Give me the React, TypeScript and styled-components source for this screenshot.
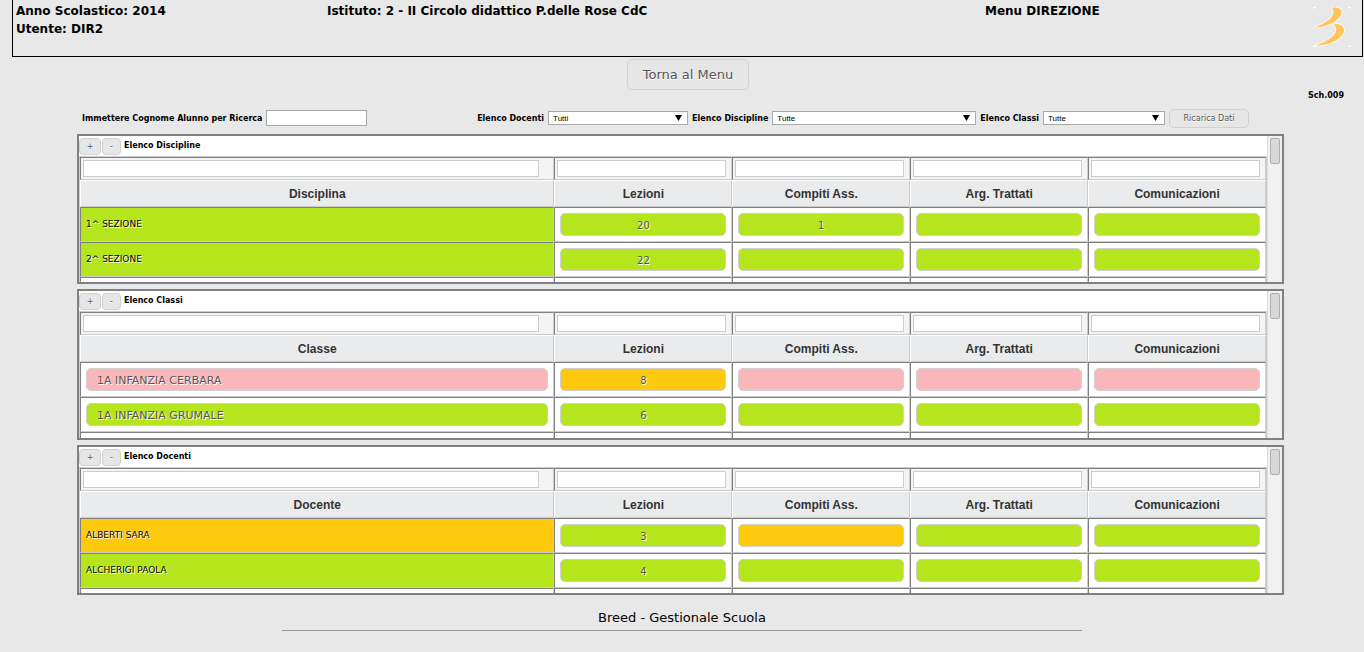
import React from 'react';
import styled, { createGlobalStyle } from 'styled-components';

const GlobalStyle = createGlobalStyle`
  * { box-sizing: border-box; }
  body {
    margin: 0;
    background: #e8e8e8;
    color: #000;
    font-family: Verdana, "DejaVu Sans", sans-serif;
    font-size: 8px;
  }
`;

const green = '#b5e61d';
const amber = '#ffc90e';
const pink = '#fab7b9';

const Page = styled.div`
  display: flex;
  flex-direction: column;
`;

const Header = styled.header`
  display: grid;
  grid-template-columns: 311fr 658fr 366fr;
  height: 57px;
  margin: 0 1px 0 12px;
  padding: 2px 11px 0 3px;
  border: 1px solid #000;
  border-top: 0;
  font-size: 12px;
  font-weight: bold;
  line-height: 18px;
`;

const HeaderEnd = styled.div`
  display: flex;
  justify-content: space-between;
`;

const Logo = styled.svg`
  width: 38px;
  height: 40px;
  margin-top: 5px;
`;

const ButtonBase = styled.button`
  border: 1px solid #d0d0d0;
  border-radius: 5px;
  background: #e6e6e6;
  color: #555;
  font-family: inherit;
  text-shadow: 0 1px 0 #fff;
`;

const MenuButton = styled(ButtonBase)`
  align-self: center;
  width: 122px;
  height: 31px;
  margin: 2px 0 0 12px;
  padding: 0;
  font-size: 13px;
`;

const ScreenCode = styled.div`
  margin-right: 20px;
  text-align: right;
  font-weight: bold;
  line-height: 12px;
`;

const Filters = styled.form`
  display: flex;
  align-items: center;
  justify-content: space-between;
  height: 20px;
  margin: 6px 115px 6px 82px;
  font-weight: bold;
`;

const FilterGroup = styled.div`
  display: flex;
  align-items: center;
  gap: 4px;
`;

const SearchInput = styled.input`
  width: 101px;
  height: 16px;
  padding: 0 2px;
  border: 1px solid #a9a9a9;
  background: #fff;
  font: inherit;
`;

const SelectBox = styled.span<{ $width: number }>`
  position: relative;
  width: ${p => p.$width}px;
  height: 14px;

  select {
    display: block;
    width: 100%;
    height: 100%;
    padding: 0 4px;
    appearance: none;
    border: 1px solid #a9a9a9;
    border-radius: 0;
    background: #fff;
    color: #000;
    font: 8px "Liberation Sans", Arial, sans-serif;
  }

  svg {
    position: absolute;
    top: 4px;
    right: 6px;
    width: 7px;
    height: 6px;
    pointer-events: none;
  }
`;

const ReloadButton = styled(ButtonBase)`
  width: 80px;
  height: 19px;
  padding: 0;
  font-size: 8px;
`;

const Panels = styled.main`
  display: flex;
  flex-direction: column;
  gap: 5px;
  margin: 0 80px 0 77px;
`;

const PanelFrame = styled.section<{ $height: number }>`
  display: flex;
  height: ${p => p.$height}px;
  border: 2px solid #808080;
  background: #fff;
`;

const PanelBody = styled.div`
  flex: 1;
  min-width: 0;
  overflow: hidden;
`;

const ScrollTrack = styled.div`
  width: 15px;
  padding: 2px;
  border-left: 1px solid #dcdcdc;
  background: #f1f1f1;
`;

const ScrollThumb = styled.div`
  width: 10px;
  height: 26px;
  border: 1px solid #b0b0b0;
  border-radius: 2px;
  background: #d8d8d8;
`;

const PanelTitle = styled.div`
  display: flex;
  gap: 1px;
  height: 20px;
  padding-top: 2px;

  h2 {
    margin: 0 0 0 2px;
    font-size: 8px;
    line-height: 15px;
  }
`;

const SquareButton = styled(ButtonBase)<{ $width: number }>`
  width: ${p => p.$width}px;
  height: 17px;
  padding: 0;
  border-radius: 4px;
  font-size: 8px;
  line-height: 15px;
`;

const Grid = styled.table`
  width: 100%;
  table-layout: fixed;
  border: 1px solid #ccc;
  border-collapse: separate;
  border-spacing: 0;
`;

const ValueCol = styled.col`
  width: 15%;
`;

const FilterCell = styled.td<{ $wide?: boolean }>`
  height: 23px;
  padding: 2px ${p => (p.$wide ? 14 : 5)}px 2px 2px;
  border: 1px solid;
  border-color: #808080 #ccc #ccc #808080;
  background: #f4f4f4;

  input {
    display: block;
    width: 100%;
    height: 17px;
    padding: 0 2px;
    border: 1px solid #ccc;
    background: #fff;
    font: inherit;
  }
`;

const HeadCell = styled.th`
  height: 27px;
  padding: 0;
  border: 1px solid;
  border-color: #fff #ccc #ccc #fff;
  background: #e9ebed;
  color: #333;
  font: bold 12px "Liberation Sans", Arial, sans-serif;
`;

const Cell = styled.td`
  height: 35px;
  padding: 0 5px;
  border: 1px solid;
  border-color: #808080 #ccc #ccc #808080;
  background: #fff;
`;

const NameCell = styled(Cell)<{ $color: string }>`
  padding-bottom: 2px;
  background: ${p => p.$color};
  font-size: 9px;
  text-shadow: 1px 1px 0 #fff;
`;

const Pill = styled(ButtonBase)<{ $color: string; $name?: boolean }>`
  display: block;
  width: 100%;
  height: 23px;
  padding: 2px 10px 0;
  background: ${p => p.$color};
  font-size: ${p => (p.$name ? 11 : 10)}px;
  line-height: 18px;
  text-align: ${p => (p.$name ? 'left' : 'center')};
  text-shadow: 1px 1px 0 #fff;
`;

const Footer = styled.footer`
  width: 800px;
  max-width: 100%;
  margin: 14px auto 0;
  padding-bottom: 3px;
  border-bottom: 1px solid #999;
  font-size: 13px;
  line-height: 18px;
  text-align: center;
`;

type Row = { name: string; nameColor: string; pill?: boolean; values: [string, string][] };

const columns = ['Lezioni', 'Compiti Ass.', 'Arg. Trattati', 'Comunicazioni'];

const panels: { title: string; heading: string; height: number; rows: Row[] }[] = [
  {
    title: 'Elenco Discipline',
    heading: 'Disciplina',
    height: 150,
    rows: [
      { name: '1^ SEZIONE', nameColor: green, values: [['20', green], ['1', green], ['', green], ['', green]] },
      { name: '2^ SEZIONE', nameColor: green, values: [['22', green], ['', green], ['', green], ['', green]] },
    ],
  },
  {
    title: 'Elenco Classi',
    heading: 'Classe',
    height: 151,
    rows: [
      { name: '1A INFANZIA CERBARA', nameColor: pink, pill: true, values: [['8', amber], ['', pink], ['', pink], ['', pink]] },
      { name: '1A INFANZIA GRUMALE', nameColor: green, pill: true, values: [['6', green], ['', green], ['', green], ['', green]] },
    ],
  },
  {
    title: 'Elenco Docenti',
    heading: 'Docente',
    height: 150,
    rows: [
      { name: 'ALBERTI SARA', nameColor: amber, values: [['3', green], ['', amber], ['', green], ['', green]] },
      { name: 'ALCHERIGI PAOLA', nameColor: green, values: [['4', green], ['', green], ['', green], ['', green]] },
    ],
  },
];

function Select({ label, option, width }: { label: string; option: string; width: number }) {
  const id = label.replace(/ /g, '-').toLowerCase();
  return (
    <>
      <label htmlFor={id}>{label}</label>
      <SelectBox $width={width}>
        <select id={id}>
          <option>{option}</option>
        </select>
        <svg viewBox="0 0 7 6" aria-hidden="true">
          <path d="M0 0h7L3.5 6z" />
        </svg>
      </SelectBox>
    </>
  );
}

function Panel({ title, heading, height, rows }: (typeof panels)[number]) {
  return (
    <PanelFrame $height={height}>
      <PanelBody>
        <PanelTitle>
          <SquareButton type="button" $width={22}>+</SquareButton>
          <SquareButton type="button" $width={19}>-</SquareButton>
          <h2>{title}</h2>
        </PanelTitle>
        <Grid>
          <colgroup>
            <col />
            {columns.map(c => <ValueCol key={c} />)}
          </colgroup>
          <thead>
            <tr>
              {[heading, ...columns].map((c, i) => (
                <FilterCell key={c} $wide={i === 0}>
                  <input type="text" aria-label={c} />
                </FilterCell>
              ))}
            </tr>
            <tr>
              {[heading, ...columns].map(c => <HeadCell key={c} scope="col">{c}</HeadCell>)}
            </tr>
          </thead>
          <tbody>
            {rows.map(row => (
              <tr key={row.name}>
                {row.pill ? (
                  <Cell><Pill type="button" $color={row.nameColor} $name>{row.name}</Pill></Cell>
                ) : (
                  <NameCell $color={row.nameColor}>{row.name}</NameCell>
                )}
                {row.values.map(([value, color], i) => (
                  <Cell key={columns[i]}>
                    <Pill type="button" $color={color} aria-label={value ? undefined : columns[i]}>{value}</Pill>
                  </Cell>
                ))}
              </tr>
            ))}
            <tr>
              <Cell />
              {columns.map(c => <Cell key={c} />)}
            </tr>
          </tbody>
        </Grid>
      </PanelBody>
      <ScrollTrack><ScrollThumb /></ScrollTrack>
    </PanelFrame>
  );
}

export default function App() {
  return (
    <Page>
      <GlobalStyle />
      <Header>
        <div>
          <div>Anno Scolastico: 2014</div>
          <div>Utente: DIR2</div>
        </div>
        <div>Istituto: 2 - II Circolo didattico P.delle Rose CdC</div>
        <HeaderEnd>
          <span>Menu DIREZIONE</span>
          <Logo viewBox="0 0 38 40" aria-hidden="true">
            <path d="M.5 2V.5H3M35 .5h2.500V2M.5 38v1.500H3M35 39.500h2.500V38" fill="none" stroke="#fff" />
            <g fill="#ffc45a" stroke="#fff" strokeWidth="1.500" paintOrder="stroke">
              <path d="M18.500 .8C24 -.2 29 1.500 28.700 5.500C28 13 14 20.500 .8 20.800C11 17 26 8.500 18.500 .8Z" />
              <path d="M20.500 17.300C26.500 16.300 31.500 19 31 24C29.500 32.500 15 38.500 2 38.800C14 35 29.500 26 20.500 17.300Z" />
            </g>
          </Logo>
        </HeaderEnd>
      </Header>
      <MenuButton type="button">Torna al Menu</MenuButton>
      <ScreenCode>Sch.009</ScreenCode>
      <Filters>
        <FilterGroup>
          <label htmlFor="cognome">Immettere Cognome Alunno per Ricerca</label>
          <SearchInput id="cognome" type="text" />
        </FilterGroup>
        <FilterGroup>
          <Select label="Elenco Docenti" option="Tutti" width={140} />
          <Select label="Elenco Discipline" option="Tutte" width={204} />
          <Select label="Elenco Classi" option="Tutte" width={122} />
          <ReloadButton type="button">Ricarica Dati</ReloadButton>
        </FilterGroup>
      </Filters>
      <Panels>
        {panels.map(p => <Panel key={p.title} {...p} />)}
      </Panels>
      <Footer>Breed - Gestionale Scuola</Footer>
    </Page>
  );
}
